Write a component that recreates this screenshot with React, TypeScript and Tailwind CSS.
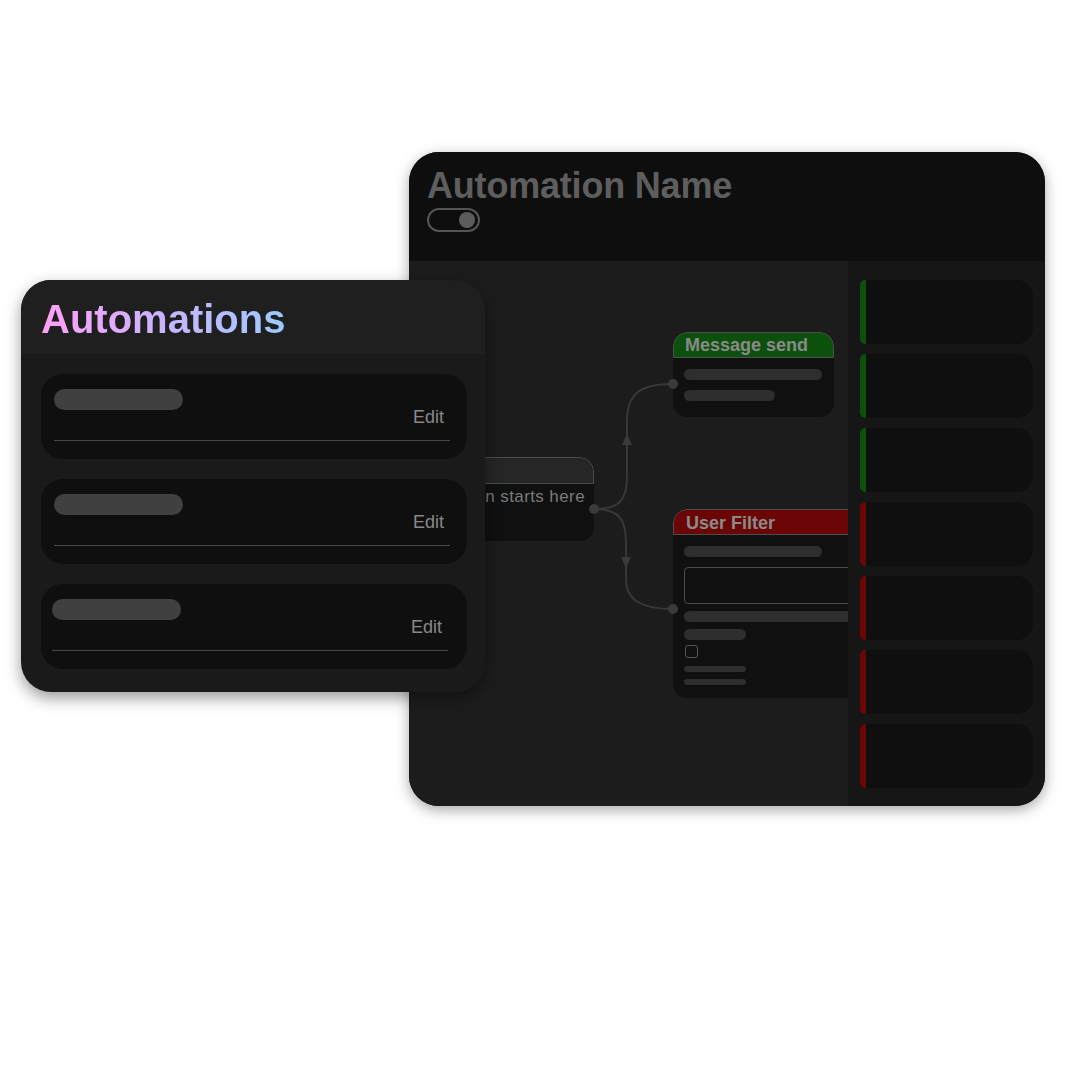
const font = { fontFamily: '"Liberation Sans", Arial, sans-serif' };

type SideCard = { tone: "green" | "red" };
const sideCards: SideCard[] = [
  { tone: "green" },
  { tone: "green" },
  { tone: "green" },
  { tone: "red" },
  { tone: "red" },
  { tone: "red" },
  { tone: "red" },
];

function Port({ x, y }: { x: number; y: number }) {
  return <circle cx={x} cy={y} r={5} fill="#3a3a3a" />;
}

function Connectors() {
  return (
    <svg className="absolute left-0 top-0" width={439} height={545} viewBox="0 0 439 545">
      <path d="M185 248 C 212 248 218 238 218 215 L 218 160 C 218 132 232 123 264 123" fill="none" stroke="#383838" strokeWidth={2} />
      <path d="M185 248 C 210 248 217 258 217 282 L 217 318 C 217 340 234 348 264 348" fill="none" stroke="#383838" strokeWidth={2} />
      <polygon points="218,173 213,184 223,184" fill="#3a3a3a" />
      <polygon points="217,307 212,296 222,296" fill="#3a3a3a" />
      <Port x={185} y={248} />
      <Port x={264} y={123} />
      <Port x={264} y={348} />
    </svg>
  );
}

function AutomationEditor() {
  return (
    <div className="absolute left-[409px] top-[152px] flex h-[654px] w-[636px] flex-col overflow-hidden rounded-[30px] bg-[#1c1c1c] shadow-[0_4px_14px_rgba(0,0,0,0.35)]">
      <div className="h-[109px] shrink-0 bg-[#0e0e0e] px-[18px] pt-[14px]">
        <div className="text-[36px] font-bold leading-[40px] tracking-[-0.2px] text-[#5e5e5e]">Automation Name</div>
        <div className="mt-[2px] flex h-[24px] w-[53px] items-center justify-end rounded-full border-2 border-[#555] pr-[3px]">
          <div className="h-[16px] w-[16px] rounded-full bg-[#5c5c5c]" />
        </div>
      </div>

      <div className="flex flex-1">
        {/* canvas */}
        <div className="relative flex-1 overflow-hidden bg-[#1c1c1c]">
          {/* start node */}
          <div className="absolute left-[-30px] top-[196px] flex h-[84px] w-[215px] flex-col overflow-hidden rounded-[14px] bg-[#101010]">
            <div className="h-[27px] shrink-0 rounded-t-[14px] border border-[#4a4a4a] bg-[#262626]" />
            <div className="pr-[9px] pt-[3px] text-right text-[17px] leading-[20px] tracking-[0.4px] text-[#7a7a7a]">Automation starts here</div>
          </div>

          {/* message send */}
          <div className="absolute left-[264px] top-[71px] flex h-[85px] w-[161px] flex-col overflow-hidden rounded-[14px] bg-[#101010]">
            <div className="h-[26px] shrink-0 rounded-t-[14px] border border-[#4e4e4e] bg-[#0b500b] pl-[11px] text-[18px] font-bold leading-[25px] text-[#8a8a8a]">
              Message send
            </div>
            <div className="flex flex-col gap-[10px] px-[11px] pt-[11px]">
              <div className="h-[11px] w-[138px] rounded-full bg-[#2e2e2e]" />
              <div className="h-[11px] w-[91px] rounded-full bg-[#2e2e2e]" />
            </div>
          </div>

          {/* user filter */}
          <div className="absolute left-[264px] top-[248px] flex h-[189px] w-[210px] flex-col overflow-hidden rounded-[14px] bg-[#101010]">
            <div className="h-[26px] shrink-0 rounded-t-[14px] border border-[#4e4e4e] bg-[#6c0606] pl-[12px] text-[18px] font-bold leading-[27px] text-[#8a8a8a]">
              User Filter
            </div>
            <div className="flex flex-col px-[11px] pt-[11px]">
              <div className="h-[11px] w-[138px] rounded-full bg-[#2e2e2e]" />
              <div className="mt-[10px] h-[37px] w-[190px] rounded-[4px] border border-[#4a4a4a]" />
              <div className="mt-[7px] h-[11px] w-[190px] rounded-full bg-[#2e2e2e]" />
              <div className="mt-[7px] h-[11px] w-[62px] rounded-full bg-[#2e2e2e]" />
              <div className="ml-[1px] mt-[5px] h-[13px] w-[13px] rounded-[3px] border border-[#555]" />
              <div className="mt-[8px] h-[6px] w-[62px] rounded-full bg-[#2e2e2e]" />
              <div className="mt-[7px] h-[6px] w-[62px] rounded-full bg-[#2e2e2e]" />
            </div>
          </div>

          <Connectors />
        </div>

        {/* sidebar */}
        <div className="relative z-10 flex w-[197px] shrink-0 flex-col gap-[10px] bg-[#161616] px-[12px] pt-[19px]">
          {sideCards.map((c, i) => (
            <div key={i} className="flex h-[64px] overflow-hidden rounded-l-[5px] rounded-r-[16px] bg-[#0f0f0f]">
              <div className={`w-[6px] shrink-0 ${c.tone === "green" ? "bg-[#0b500b]" : "bg-[#6c0606]"}`} />
            </div>
          ))}
        </div>
      </div>
    </div>
  );
}

function ListItem({ shift = 0 }: { shift?: number }) {
  return (
    <div className="h-[85px] rounded-[22px] bg-[#0f0f0f]">
      <div className="flex h-full flex-col" style={{ paddingLeft: 13 - shift, paddingRight: 17 + shift }}>
        <div className="mt-[15px] h-[21px] w-[129px] rounded-full bg-[#404040]" />
        <div className="mt-[-3px] self-end pr-[6px] text-[18px] leading-[21px] text-[#888]">Edit</div>
        <div className="mt-[12px] h-px w-full bg-[#474747]" />
      </div>
    </div>
  );
}

function AutomationList() {
  return (
    <div className="absolute left-[21px] top-[280px] z-20 flex h-[412px] w-[464px] flex-col overflow-hidden rounded-[30px] bg-[#1a1a1a] shadow-[0_6px_16px_rgba(0,0,0,0.4)]">
      <div className="h-[74px] shrink-0 bg-[#1f1f1f] pl-[20px] pt-[16px]">
        <span className="bg-gradient-to-r from-[#ff9ff5] via-[#c8b4ff] to-[#9ccaff] bg-clip-text text-[40px] font-bold leading-[46px] text-transparent">
          Automations
        </span>
      </div>
      <div className="flex flex-col gap-[20px] pl-[20px] pr-[18px] pt-[20px]">
        <ListItem />
        <ListItem />
        <ListItem shift={2} />
      </div>
    </div>
  );
}

export default function App() {
  return (
    <div className="relative h-[1080px] w-[1080px] overflow-hidden bg-white" style={font}>
      <AutomationEditor />
      <AutomationList />
    </div>
  );
}
